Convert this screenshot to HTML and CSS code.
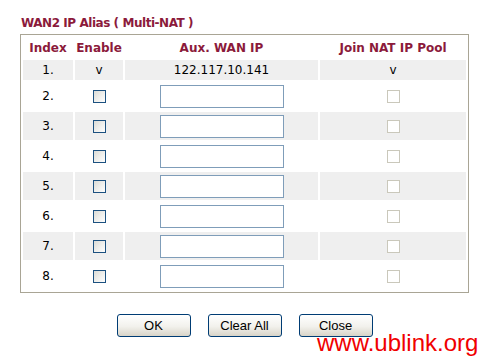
FILE: index.html
```html
<!DOCTYPE html>
<html lang="en">
<head>
    <meta charset="UTF-8"/>
    <title>WAN2 IP Alias</title>
    <link rel="stylesheet" href="styles.css">
</head>
<body>
<div class="page">
    <div class="title">WAN2 IP Alias ( Multi-NAT )</div>

    <table class="alias">
        <thead>
        <tr>
            <th class="col-index">Index</th>
            <th class="col-enable">Enable</th>
            <th class="col-ip">Aux. WAN IP</th>
            <th class="col-pool">Join NAT IP Pool</th>
        </tr>
        </thead>
        <tbody>
        <tr class="first shade">
            <td>1.</td>
            <td>v</td>
            <td>122.117.10.141</td>
            <td>v</td>
        </tr>
        <tr>
            <td>2.</td>
            <td><input type="checkbox" class="check"/></td>
            <td><input type="text" class="ip"/></td>
            <td><input type="checkbox" class="check" disabled/></td>
        </tr>
        <tr class="shade">
            <td>3.</td>
            <td><input type="checkbox" class="check"/></td>
            <td><input type="text" class="ip"/></td>
            <td><input type="checkbox" class="check" disabled/></td>
        </tr>
        <tr>
            <td>4.</td>
            <td><input type="checkbox" class="check"/></td>
            <td><input type="text" class="ip"/></td>
            <td><input type="checkbox" class="check" disabled/></td>
        </tr>
        <tr class="shade">
            <td>5.</td>
            <td><input type="checkbox" class="check"/></td>
            <td><input type="text" class="ip"/></td>
            <td><input type="checkbox" class="check" disabled/></td>
        </tr>
        <tr>
            <td>6.</td>
            <td><input type="checkbox" class="check"/></td>
            <td><input type="text" class="ip"/></td>
            <td><input type="checkbox" class="check" disabled/></td>
        </tr>
        <tr class="shade">
            <td>7.</td>
            <td><input type="checkbox" class="check"/></td>
            <td><input type="text" class="ip"/></td>
            <td><input type="checkbox" class="check" disabled/></td>
        </tr>
        <tr>
            <td>8.</td>
            <td><input type="checkbox" class="check"/></td>
            <td><input type="text" class="ip"/></td>
            <td><input type="checkbox" class="check" disabled/></td>
        </tr>
        </tbody>
    </table>

    <div class="actions">
        <button class="btn">OK</button>
        <button class="btn">Clear All</button>
        <button class="btn">Close</button>
    </div>
</div>

<div class="watermark">www.ublink.org</div>
</body>
</html>
```

FILE: styles.css
```css
* {
    box-sizing: border-box;
}
body {
    margin: 0;
    background: #fff;
    font-family: "DejaVu Sans", Verdana, sans-serif;
    font-size: 12px;
    color: #000;
}
.page {
    padding: 16px 0 0 20px;
    width: 469px;
}
.title {
    padding-left: 1px;
    font-weight: bold;
    font-size: 12px;
    letter-spacing: -0.45px;
    line-height: 15px;
    color: #8b1a3b;
}
.alias {
    margin-top: 3px;
    width: 449px;
    table-layout: fixed;
    border: 1px solid #a9a595;
    border-spacing: 2px;
}
.alias th,
.alias td {
    padding: 0;
    text-align: center;
    vertical-align: middle;
}
.alias th {
    height: 21px;
    font-weight: bold;
    color: #8b1a3b;
}
.col-index {
    width: 50px;
}
.col-enable {
    width: 48px;
}
.col-ip {
    width: 193px;
}
.col-pool {
    width: 146px;
}
.alias td {
    height: 28px;
}
.alias tr.first td {
    height: 20px;
}
.alias tr.shade td {
    background: #efefef;
}
.check {
    -webkit-appearance: none;
    appearance: none;
    display: inline-block;
    width: 13px;
    height: 13px;
    margin: 0;
    vertical-align: middle;
    border: 1px solid #1c5180;
    background: linear-gradient(135deg, #dcdcd6, #ffffff);
}
.check:disabled {
    border-color: #cac8bb;
    background: #fff;
}
.ip {
    display: inline-block;
    width: 124px;
    height: 23px;
    margin: 0;
    padding: 2px;
    vertical-align: middle;
    border: 1px solid #7f9db9;
    background: #fff;
    font-family: inherit;
    font-size: 12px;
}
.actions {
    width: 449px;
    margin-top: 21px;
    display: flex;
    justify-content: center;
    gap: 17px;
}
.btn {
    width: 74px;
    height: 23px;
    padding: 0;
    border: 1px solid #003c74;
    border-radius: 3px;
    background: linear-gradient(#ffffff, #f2f1ec 55%, #d8d4c8);
    font-family: "Liberation Sans", Arial, sans-serif;
    font-size: 13px;
    color: #000;
}
.watermark {
    position: absolute;
    left: 317px;
    top: 336px;
    font-family: "Liberation Sans", Arial, sans-serif;
    font-size: 24px;
    line-height: 14px;
    color: #f00000;
}
```
